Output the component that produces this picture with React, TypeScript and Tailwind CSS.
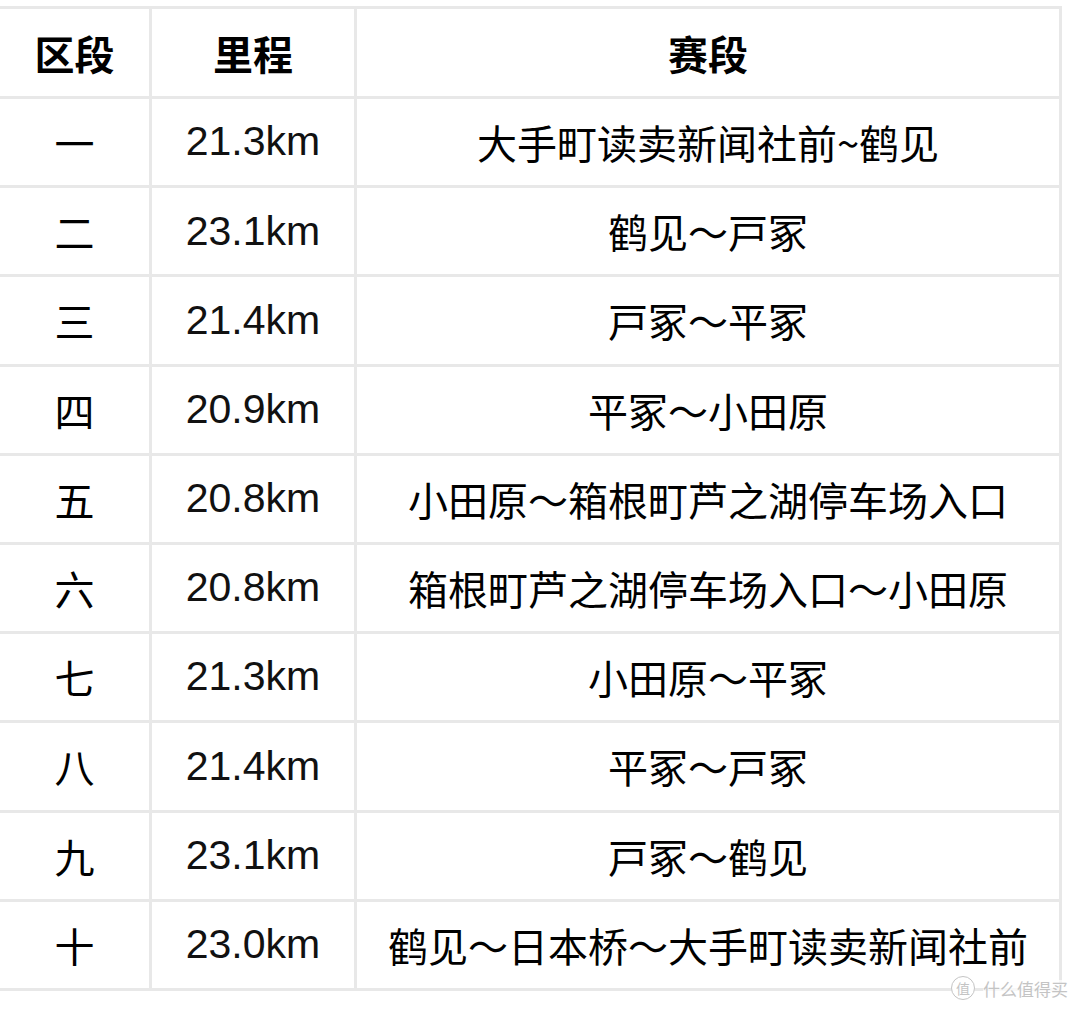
const rows: [string, string, string][] = [
  ['一', '21.3km', '大手町读卖新闻社前~鹤见'],
  ['二', '23.1km', '鹤见～戸冢'],
  ['三', '21.4km', '戸冢～平冢'],
  ['四', '20.9km', '平冢～小田原'],
  ['五', '20.8km', '小田原～箱根町芦之湖停车场入口'],
  ['六', '20.8km', '箱根町芦之湖停车场入口～小田原'],
  ['七', '21.3km', '小田原～平冢'],
  ['八', '21.4km', '平冢～戸冢'],
  ['九', '23.1km', '戸冢～鹤见'],
  ['十', '23.0km', '鹤见～日本桥～大手町读卖新闻社前'],
];

const cjk = "[font-family:'Noto_Sans_CJK_SC','Noto_Sans_CJK_JP',sans-serif]";

export default function App() {
  return (
    <div className="relative h-[1010px] w-[1080px] bg-white pt-[6px]">
      <div className="grid w-[1062px] grid-cols-[149px_202px_702px] gap-[3px] bg-[#e8e8e8] py-[3px] pr-[3px]">
        {['区段', '里程', '赛段'].map((h) => (
          <div
            key={h}
            className={`flex h-[87px] items-center justify-center bg-white text-[40px] font-bold text-black ${cjk}`}
          >
            {h}
          </div>
        ))}
        {rows.map(([no, km, seg]) => (
          <div key={no} className="contents">
            <div className={`flex h-[86.2px] items-center justify-center bg-white text-[40px] text-black ${cjk}`}>
              {no}
            </div>
            <div className="flex h-[86.2px] items-center justify-center bg-white font-['Liberation_Sans',Arial,sans-serif] text-[41px] text-[#111]">
              {km}
            </div>
            <div className={`flex h-[86.2px] items-center justify-center whitespace-nowrap bg-white text-[40px] text-black ${cjk}`}>
              {seg}
            </div>
          </div>
        ))}
      </div>

      {/* watermark */}
      <div className={`absolute left-[951px] top-[976px] flex items-center gap-[8px] text-[#c4c4c4] ${cjk}`}>
        <span className="flex h-[24px] w-[24px] items-center justify-center rounded-full border-[1.5px] border-[#c4c4c4] bg-white text-[14px] leading-none">
          值
        </span>
        <span className="bg-white/70 text-[17px] leading-none">什么值得买</span>
      </div>
    </div>
  );
}
